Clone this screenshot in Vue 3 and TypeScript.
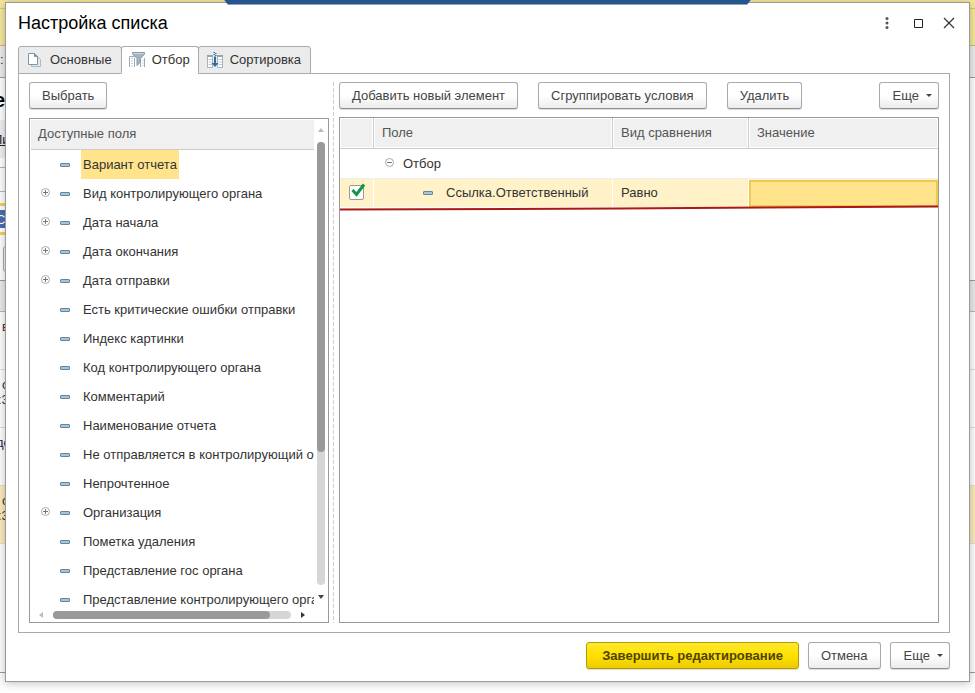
<script setup lang="ts">
import { ref } from 'vue'

interface Field { title: string; expandable?: boolean }

const fields: Field[] = [
  { title: 'Вариант отчета' },
  { title: 'Вид контролирующего органа', expandable: true },
  { title: 'Дата начала', expandable: true },
  { title: 'Дата окончания', expandable: true },
  { title: 'Дата отправки', expandable: true },
  { title: 'Есть критические ошибки отправки' },
  { title: 'Индекс картинки' },
  { title: 'Код контролирующего органа' },
  { title: 'Комментарий' },
  { title: 'Наименование отчета' },
  { title: 'Не отправляется в контролирующий орган' },
  { title: 'Непрочтенное' },
  { title: 'Организация', expandable: true },
  { title: 'Пометка удаления' },
  { title: 'Представление гос органа' },
  { title: 'Представление контролирующего органа' },
]

const tabs = ['Основные', 'Отбор', 'Сортировка']
const activeTab = ref(1)
const selected = ref(0)
const enabled = ref(true)
const value = ref('')
</script>

<template>
  <div class="screen">
    <div class="backdrop" aria-hidden="true">
      <div class="band b-top"></div>
      <div class="band b-yellow"></div>
      <div class="band b-tool">:</div>
      <div class="band b-title">е</div>
      <div class="band b-link"><u>Пи</u></div>
      <div class="band b-gap"></div>
      <div class="band b-field"><span>С</span></div>
      <div class="band b-button"><i></i></div>
      <div class="band b-head"></div>
      <div class="band b-row first">в</div>
      <div class="band b-row"><span>с</span><span>:3</span></div>
      <div class="band b-row link">дс</div>
      <div class="band b-row current"><span>с</span><span>:3</span></div>
      <div class="band b-rest"></div>
      <div class="banner"></div>
    </div>

    <main class="dialog">
      <header class="titlebar">
        <h1>Настройка списка</h1>
        <div class="window-buttons">
          <button type="button" aria-label="Меню">
            <svg width="16" height="16" viewBox="0 0 16 16" fill="#555"><circle cx="8" cy="3.500" r="1.500" /><circle cx="8" cy="8" r="1.500" /><circle cx="8" cy="12.500" r="1.500" /></svg>
          </button>
          <button type="button" aria-label="Развернуть">
            <svg width="16" height="16" viewBox="0 0 16 16" fill="none" stroke="#222"><path d="M4.500 4.500H12.500V12.500H4.500Z" /></svg>
          </button>
          <button type="button" aria-label="Закрыть">
            <svg width="16" height="16" viewBox="0 0 16 16" fill="none" stroke="#333" stroke-width="1.200"><path d="M3 3l10 10M13 3L3 13" /></svg>
          </button>
        </div>
      </header>

      <div class="tabs" role="tablist">
        <button v-for="(tab, i) in tabs" :key="tab" type="button" role="tab" class="tab" :class="{ active: i === activeTab }" :aria-selected="i === activeTab" @click="activeTab = i">
          <svg v-if="i === 0" width="16" height="16" viewBox="0 0 16 16">
            <path d="M4.500 4.500H10.500L13.500 7.500V14.500H4.500Z" fill="#e3e9ed" stroke="#a9b9c5" />
            <path d="M1.500 1.500H7.500L10.500 4.500V12.500H1.500Z" fill="#fff" stroke="#7d95a8" />
            <path d="M7.500 1.500V4.500H10.500Z" fill="#7d95a8" stroke="#7d95a8" />
          </svg>
          <svg v-else-if="i === 1" width="16" height="16" viewBox="0 0 16 16">
            <path d="M.5 15V4.500H5.500M15.500 15V6M5.500 15V6M11.500 15V9" fill="none" stroke="#9aabb8" />
            <path d="M2 6.500h2M2 9h2M2 11.500h2M2 14h2M13 8.500h1.500M13 11h1.500M13 13.500h1.500" stroke="#c3ced6" />
            <path d="M3.500 .5H15.500V2L11.500 6.500V10L8 13.500V6.500L3.500 2Z" fill="#a3b4c1" stroke="#8799a7" />
            <path d="M4.500 1.500H14.500" stroke="#d0dae1" />
          </svg>
          <svg v-else width="16" height="16" viewBox="0 0 16 16">
            <path d="M.5 15.500V3.500H5.500V15.500ZM10.500 15.500V3.500H15.500V15.500Z" fill="#fff" stroke="#a5b5c0" />
            <path d="M0 4H6M10 4H16" stroke="#92a5b3" stroke-width="2" />
            <path d="M1.500 7.500H5M1.500 10H5M1.500 12.500H5M11.500 7.500H15M11.500 10H15M11.500 12.500H15" stroke="#c0ccd4" />
            <path d="M8 4.500V13" stroke="#316b9f" stroke-width="2" />
            <path d="M4.500 11H11.500L8 15Z" fill="#316b9f" />
            <path d="M6.500 .5h1.500M8 1.500h1.500M6.500 2.500h1.500M8 3.500h1.500" stroke="#316b9f" />
          </svg>
          <span>{{ tab }}</span>
        </button>
      </div>

      <section class="panel">
        <div class="available">
          <div class="toolbar"><button type="button" class="btn">Выбрать</button></div>
          <div class="list">
            <div class="list-view">
              <div class="list-head">Доступные поля</div>
              <ul>
                <li v-for="(field, i) in fields" :key="field.title" @click="selected = i">
                  <button v-if="field.expandable" type="button" class="node" :aria-label="'Раскрыть ' + field.title">
                    <svg width="9" height="9" viewBox="0 0 9 9" fill="none"><circle cx="4.500" cy="4.500" r="4" stroke="#aaa" /><path d="M2 4.500H7M4.500 2V7" stroke="#777" /></svg>
                  </button>
                  <span v-else class="node"></span>
                  <i class="dash"></i>
                  <span class="name" :class="{ selected: i === selected }">{{ field.title }}</span>
                </li>
              </ul>
            </div>
            <div class="vbar">
              <svg width="6" height="4" viewBox="0 0 6 4"><path d="M0 4L3 0L6 4Z" fill="#bbb" /></svg>
              <div class="track"><div class="thumb"></div></div>
              <svg width="6" height="4" viewBox="0 0 6 4"><path d="M0 0H6L3 4Z" fill="#444" /></svg>
            </div>
            <div class="hbar">
              <svg width="4" height="6" viewBox="0 0 4 6"><path d="M4 0V6L0 3Z" fill="#bbb" /></svg>
              <div class="track"><div class="thumb"></div></div>
              <svg width="4" height="6" viewBox="0 0 4 6"><path d="M0 0V6L4 3Z" fill="#333" /></svg>
            </div>
          </div>
        </div>

        <div class="splitter"></div>

        <div class="conditions">
          <div class="toolbar">
            <button type="button" class="btn">Добавить новый элемент</button>
            <button type="button" class="btn">Сгруппировать условия</button>
            <button type="button" class="btn">Удалить</button>
            <button type="button" class="btn more">Еще<i class="caret"></i></button>
          </div>
          <div class="grid-box">
            <table>
              <colgroup><col class="c-check" /><col class="c-field" /><col class="c-kind" /><col /></colgroup>
              <thead>
                <tr><th></th><th>Поле</th><th>Вид сравнения</th><th>Значение</th></tr>
              </thead>
              <tbody>
                <tr class="group">
                  <td></td>
                  <td colspan="3">
                    <div class="cell group-cell">
                      <button type="button" class="node" aria-label="Свернуть Отбор">
                        <svg width="9" height="9" viewBox="0 0 9 9" fill="none"><circle cx="4.500" cy="4.500" r="4" stroke="#aaa" /><path d="M2 4.500H7" stroke="#777" /></svg>
                      </button>
                      <span>Отбор</span>
                    </div>
                  </td>
                </tr>
                <tr class="current">
                  <td class="mark">
                    <label class="check">
                      <input v-model="enabled" type="checkbox" aria-label="Использовать условие" />
                      <svg v-if="enabled" width="17" height="17" viewBox="0 0 17 17" fill="none" stroke="#159447" stroke-width="3"><path d="M3.500 7L7.500 11.500L15 1.500" /></svg>
                    </label>
                  </td>
                  <td><div class="cell item-cell"><i class="dash"></i><span>Ссылка.Ответственный</span></div></td>
                  <td>Равно</td>
                  <td class="value"><input v-model="value" type="text" aria-label="Значение" /></td>
                </tr>
              </tbody>
            </table>
            <svg class="underline" viewBox="0 0 600 6" preserveAspectRatio="none"><path d="M0 4.500L280 3.500L600 1.500" fill="none" stroke="#ac1818" stroke-width="2" /></svg>
          </div>
        </div>
      </section>

      <footer>
        <button type="button" class="btn primary">Завершить редактирование</button>
        <button type="button" class="btn">Отмена</button>
        <button type="button" class="btn more">Еще<i class="caret"></i></button>
      </footer>
    </main>
  </div>
</template>

<style>
body { margin: 0; }
</style>

<style scoped>
* { box-sizing: border-box; }
.screen {
  position: relative;
  display: flex;
  height: 100vh;
  min-height: 480px;
  padding: 2px 5px 11px;
  overflow: hidden;
  background: #fdfdfd;
  color: #333;
  font: 13px/16px "Liberation Sans", Arial, sans-serif;
}
button, input { font: inherit; color: inherit; }

.backdrop { position: absolute; inset: 0; display: flex; flex-direction: column; }
.band { flex: none; overflow: hidden; border-bottom: 1px solid #b5b5b5; white-space: nowrap; }
.b-top { height: 9px; background: #f5e79c; border-color: #d8c878; }
.b-yellow { height: 37px; background: #f5e79c; border-color: #c9bb78; }
.b-tool { height: 32px; padding-top: 6px; background: #ebebeb; border-color: #999; }
.b-title { height: 42px; padding-top: 10px; border: 0; color: #000; font-weight: bold; font-size: 20px; line-height: 24px; text-indent: -6px; }
.b-link, .b-gap, .b-field { width: 50%; }
.b-link { height: 48px; padding-top: 12px; background: linear-gradient(#efefef 38px, #fff 38px); color: #222; text-indent: -7px; }
.b-gap { height: 24px; }
.b-field { height: 44px; padding: 11px 0 0; border: 0; }
.b-field span { display: block; height: 32px; padding-top: 6px; border: solid #f3d056; border-width: 3px 0; background: linear-gradient(#fff 4px, #4a6cb5 4px, #4a6cb5 22px, #fff 22px); color: #fff; text-indent: -4px; }
.b-button { height: 45px; padding: 10px 3px; border-color: #999; }
.b-button i { display: block; width: 50%; height: 26px; border: 1px solid #aaa; border-radius: 3px; background: #f5f5f5; }
.b-head { height: 31px; background: #e9e9e9; }
.b-row { height: 58px; padding-top: 7px; border-color: #ddd; }
.b-row span { display: block; height: 15px; }
.b-row span:first-child { padding-left: 2px; }
.b-row span:last-child { text-indent: -2px; }
.b-row.first { padding-left: 2px; color: #622; }
.b-row.link { color: #225; text-indent: -4px; }
.b-row.current { background: #fbeab9; }
.b-rest { height: 129px; border-color: #999; }
.banner { position: absolute; top: 0; left: 23%; right: 23%; height: 5px; background: #25558c; border-bottom: 1px solid #8fa5bd; clip-path: polygon(0 0, 100% 0, calc(100% - 4px) 100%, 4px 100%); z-index: 2; }

.dialog {
  position: relative;
  z-index: 1;
  display: flex;
  flex: 1;
  flex-direction: column;
  min-width: 0;
  padding: 0 19px 12px 12px;
  border: 1px solid #9a9a9a;
  background: #fff;
  box-shadow: 0 1px 8px rgba(0, 0, 0, .25);
}
.titlebar { display: flex; flex: none; align-items: center; justify-content: space-between; height: 43px; margin-right: -7px; padding-bottom: 3px; }
h1 { margin: 0; color: #000; font-size: 18px; line-height: 24px; font-weight: normal; }
.window-buttons { display: flex; gap: 15px; }
.window-buttons button { width: 16px; height: 16px; padding: 0; border: 0; background: none; }
.window-buttons svg { display: block; }

.tabs { display: flex; flex: none; height: 28px; margin-bottom: -1px; z-index: 1; }
.tab {
  display: flex;
  align-items: center;
  gap: 7px;
  height: 28px;
  margin: 0 -1px 0 0;
  padding: 0 9px 1px 8px;
  border: 1px solid #aaa;
  border-radius: 3px 3px 0 0;
  background: #ebebeb;
}
.tab.active { padding-right: 8px; padding-left: 7px; border-bottom-color: #fff; background: #fff; }

.panel { display: flex; flex: 1; gap: 4px; min-height: 0; padding: 8px 10px 9px; border: 1px solid #aaa; }
.available { display: flex; flex: 0 0 300px; flex-direction: column; min-width: 0; }
.conditions { display: flex; flex: 1; flex-direction: column; min-width: 0; }
.splitter { flex: none; width: 1px; margin-right: 1px; background: repeating-linear-gradient(#ccc 0 4px, #fff 4px 6px); }
.toolbar { display: flex; flex: none; gap: 20px; height: 35px; }
.available .toolbar { height: 36px; }

.btn {
  height: 27px;
  padding: 0 12px;
  border: 1px solid #aaa;
  border-bottom-color: #909090;
  border-radius: 3px;
  background: linear-gradient(#fff 50%, #ececec);
  box-shadow: 0 1px 1px rgba(0, 0, 0, .15);
  color: #444;
  white-space: nowrap;
}
.btn.more { display: flex; align-items: center; gap: 7px; padding: 0 6px 0 13px; }
.toolbar .more { margin-left: auto; }
.caret { width: 0; border: 3px solid transparent; border-top-color: #444; border-bottom: 0; }
.btn.primary { padding: 0 15px; border-color: #b39b00; background: linear-gradient(#ffe92e, #ffe000 50%, #eccb00); color: #4d4400; font-weight: bold; }

.list {
  display: grid;
  flex: 1;
  grid-template: minmax(0, 1fr) 13px / minmax(0, 1fr) 14px;
  min-height: 0;
  padding: 1px 0 0 1px;
  border: 1px solid #999;
}
.list-view { overflow: hidden; }
.list-head { height: 30px; padding: 6px 7px; border-bottom: 1px solid #ccc; background: #f0f0f0; color: #555; }
ul { margin: 0; padding: 0; list-style: none; }
li { display: flex; align-items: center; height: 29px; padding-left: 10px; white-space: nowrap; }
.node { flex: none; width: 9px; height: 9px; margin: 0 0 2px; padding: 0; border: 0; background: none; }
.node svg { display: block; }
.dash { flex: none; width: 10px; height: 4px; margin-left: 10px; border: 1px solid #6287a2; border-radius: 1px; background: #a8c5d8; }
.name { height: 29px; margin-left: 11px; padding: 7px 2px 6px; }
.name.selected { background: #ffe48c; }

.vbar { display: flex; flex-direction: column; align-items: center; gap: 10px; padding: 8px 0 10px; }
.vbar svg, .hbar svg { flex: none; }
.vbar .track { flex: 1; width: 8px; }
.track { border-radius: 4px; background: #d6d6d6; }
.thumb { border-radius: 4px; background: #999; }
.vbar .thumb { height: 70%; }
.hbar { display: flex; align-items: center; gap: 10px; padding: 0 9px 2px 8px; }
.hbar .track { flex: 1; height: 8px; }
.hbar .thumb { width: 91%; height: 8px; }

.grid-box { position: relative; flex: 1; min-height: 0; border: 1px solid #999; }
table { width: 100%; border-collapse: separate; border-spacing: 0; table-layout: fixed; }
.c-check { width: 34px; }
.c-field { width: 239px; }
.c-kind { width: 136px; }
th, td { height: 29px; padding: 0 8px; text-align: left; font-weight: normal; white-space: nowrap; }
th { height: 31px; border: solid #ccc; border-width: 0 1px 1px 0; background: #f0f0f0; box-shadow: inset 0 0 0 1px #fff; color: #555; }
th:last-child { border-right: 0; }
.current td { border-right: 1px solid #fff; border-top: 1px solid #eee; background: #fff2c8; }
.current .mark { padding: 0 0 2px 9px; }
.cell { display: flex; align-items: center; }
.group-cell { gap: 9px; padding-left: 3px; }
.item-cell { gap: 13px; padding-left: 31px; }
.check { position: relative; display: block; width: 15px; height: 15px; }
.check input { display: block; width: 15px; height: 15px; margin: 0; appearance: none; border: 1px solid #999; border-radius: 2px; background: #fff; }
.check svg { position: absolute; top: -2px; left: 0; }
.current .value { padding: 0; border-right: 0; }
.value input { display: block; width: 100%; height: 27px; padding: 0 6px; border: 2px solid #eccb50; border-radius: 0; outline: 0; background: #ffe48c; }
.underline { position: absolute; top: 87px; left: 0; width: 100%; height: 6px; }

footer { display: flex; flex: none; justify-content: flex-end; gap: 9px; padding-top: 9px; }
</style>
